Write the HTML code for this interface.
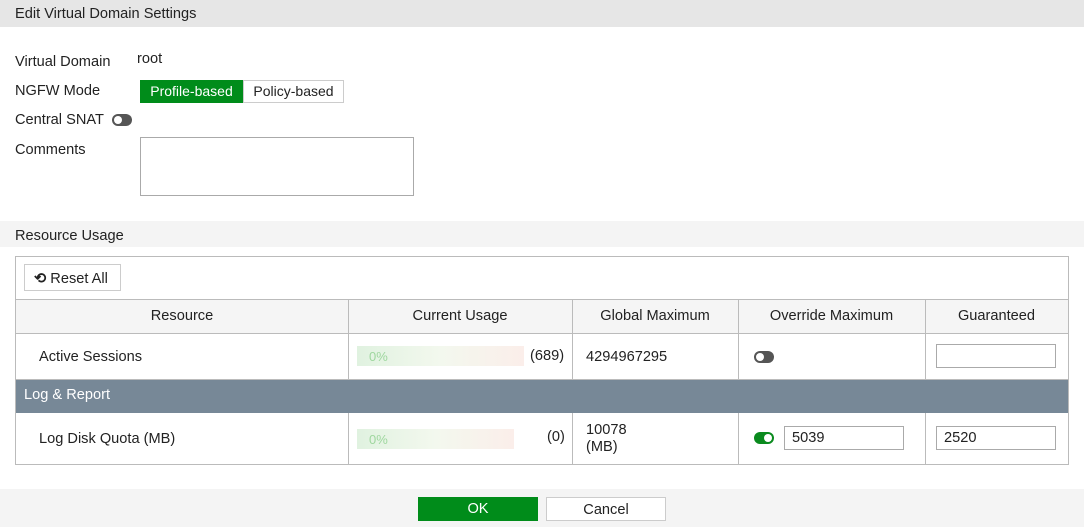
<!DOCTYPE html><html><head><style>
*{box-sizing:border-box}body{margin:0;width:1084px;height:527px;background:#fff;font-family:"Liberation Sans",sans-serif;font-size:14.6px;color:#222;position:relative;overflow:hidden}
.a{position:absolute}
.tg{position:absolute;width:20px;height:12px;border-radius:6px;background:#555}
.tg::after{content:"";position:absolute;top:2px;width:8px;height:8px;border-radius:50%;background:#fff}
.off::after{left:2px}.on{background:#0a8a1e}.on::after{right:2px}
.bar{position:absolute;height:20px;background:linear-gradient(90deg,#e0f2e0,#f3f8ee 50%,#fbeeea);color:#9fd79f;padding:3px 0 0 12px;font-size:13px}
.inp{position:absolute;border:1px solid #aaa;height:24px;padding:3px 7px}
.v{position:absolute;top:0;bottom:0;width:1px;background:#bbb}
</style></head><body>
<div class="a" style="left:0;top:0;width:1084px;height:27px;background:#e6e6e6"></div>
<div class="a" style="left:15px;top:6px">Edit Virtual Domain Settings</div>
<div class="a" style="left:15px;top:54px">Virtual Domain</div>
<div class="a" style="left:137px;top:51px">root</div>
<div class="a" style="left:15px;top:83px">NGFW Mode</div>
<div class="a" style="left:140px;top:80px;width:103px;height:23px;background:#008c1a;color:#fff;text-align:center;padding-top:3px;font-size:14px">Profile-based</div>
<div class="a" style="left:243px;top:80px;width:101px;height:23px;border:1px solid #ccc;text-align:center;padding-top:2px;font-size:14px">Policy-based</div>
<div class="a" style="left:15px;top:112px">Central SNAT</div>
<div class="tg off" style="left:112px;top:114px"></div>
<div class="a" style="left:15px;top:142px">Comments</div>
<div class="a" style="left:140px;top:137px;width:274px;height:59px;border:1px solid #aaa"></div>
<div class="a" style="left:0;top:221px;width:1084px;height:26px;background:#f4f4f4"></div>
<div class="a" style="left:15px;top:228px">Resource Usage</div>
<div class="a" style="left:15px;top:256px;width:1054px;height:209px;border:1px solid #bbb">
 <div class="a" style="left:8px;top:7px;width:97px;height:27px;border:1px solid #ccc;padding:5px 0 0 9px"><span style="font-weight:bold">&#x27F2;</span> Reset All</div>
 <div class="a" style="left:0;top:42px;width:1052px;height:35px;background:#f5f5f5;border-top:1px solid #bbb;border-bottom:1px solid #bbb"></div>
 <div class="a" style="left:0;top:122px;width:1052px;height:34px;background:#778897;color:#fff;padding:8px 0 0 8px">Log &amp; Report</div>
 <div class="a" style="left:0;top:122px;width:1052px;height:1px;background:#bbb"></div>
 <div style="position:absolute;left:0;top:42px;width:1052px;height:80px">
  <div class="v" style="left:332px"></div><div class="v" style="left:556px"></div><div class="v" style="left:722px"></div><div class="v" style="left:909px"></div>
 </div>
 <div style="position:absolute;left:0;top:156px;width:1052px;height:51px">
  <div class="v" style="left:332px"></div><div class="v" style="left:556px"></div><div class="v" style="left:722px"></div><div class="v" style="left:909px"></div>
 </div>
 <div class="a" style="left:0;width:332px;top:51px;text-align:center">Resource</div>
 <div class="a" style="left:332px;width:224px;top:51px;text-align:center">Current Usage</div>
 <div class="a" style="left:556px;width:166px;top:51px;text-align:center">Global Maximum</div>
 <div class="a" style="left:722px;width:187px;top:51px;text-align:center">Override Maximum</div>
 <div class="a" style="left:909px;width:143px;top:51px;text-align:center">Guaranteed</div>
 <div class="a" style="left:23px;top:92px">Active Sessions</div>
 <div class="bar" style="left:341px;top:89px;width:167px">0%</div>
 <div class="a" style="left:514px;top:91px">(689)</div>
 <div class="a" style="left:570px;top:92px">4294967295</div>
 <div class="tg off" style="left:738px;top:94px"></div>
 <div class="inp" style="left:920px;top:87px;width:120px"></div>
 <div class="a" style="left:23px;top:174px">Log Disk Quota (MB)</div>
 <div class="bar" style="left:341px;top:172px;width:157px">0%</div>
 <div class="a" style="left:531px;top:172px">(0)</div>
 <div class="a" style="left:570px;top:165px;line-height:17px">10078<br>(MB)</div>
 <div class="tg on" style="left:738px;top:175px"></div>
 <div class="inp" style="left:768px;top:169px;width:120px">5039</div>
 <div class="inp" style="left:920px;top:169px;width:120px">2520</div>
</div>
<div class="a" style="left:0;top:489px;width:1084px;height:38px;background:#f4f4f4"></div>
<div class="a" style="left:418px;top:497px;width:120px;height:24px;background:#008c1a;color:#fff;text-align:center;padding-top:4px">OK</div>
<div class="a" style="left:546px;top:497px;width:120px;height:24px;background:#fff;border:1px solid #ccc;text-align:center;padding-top:4px">Cancel</div>
</body></html>
